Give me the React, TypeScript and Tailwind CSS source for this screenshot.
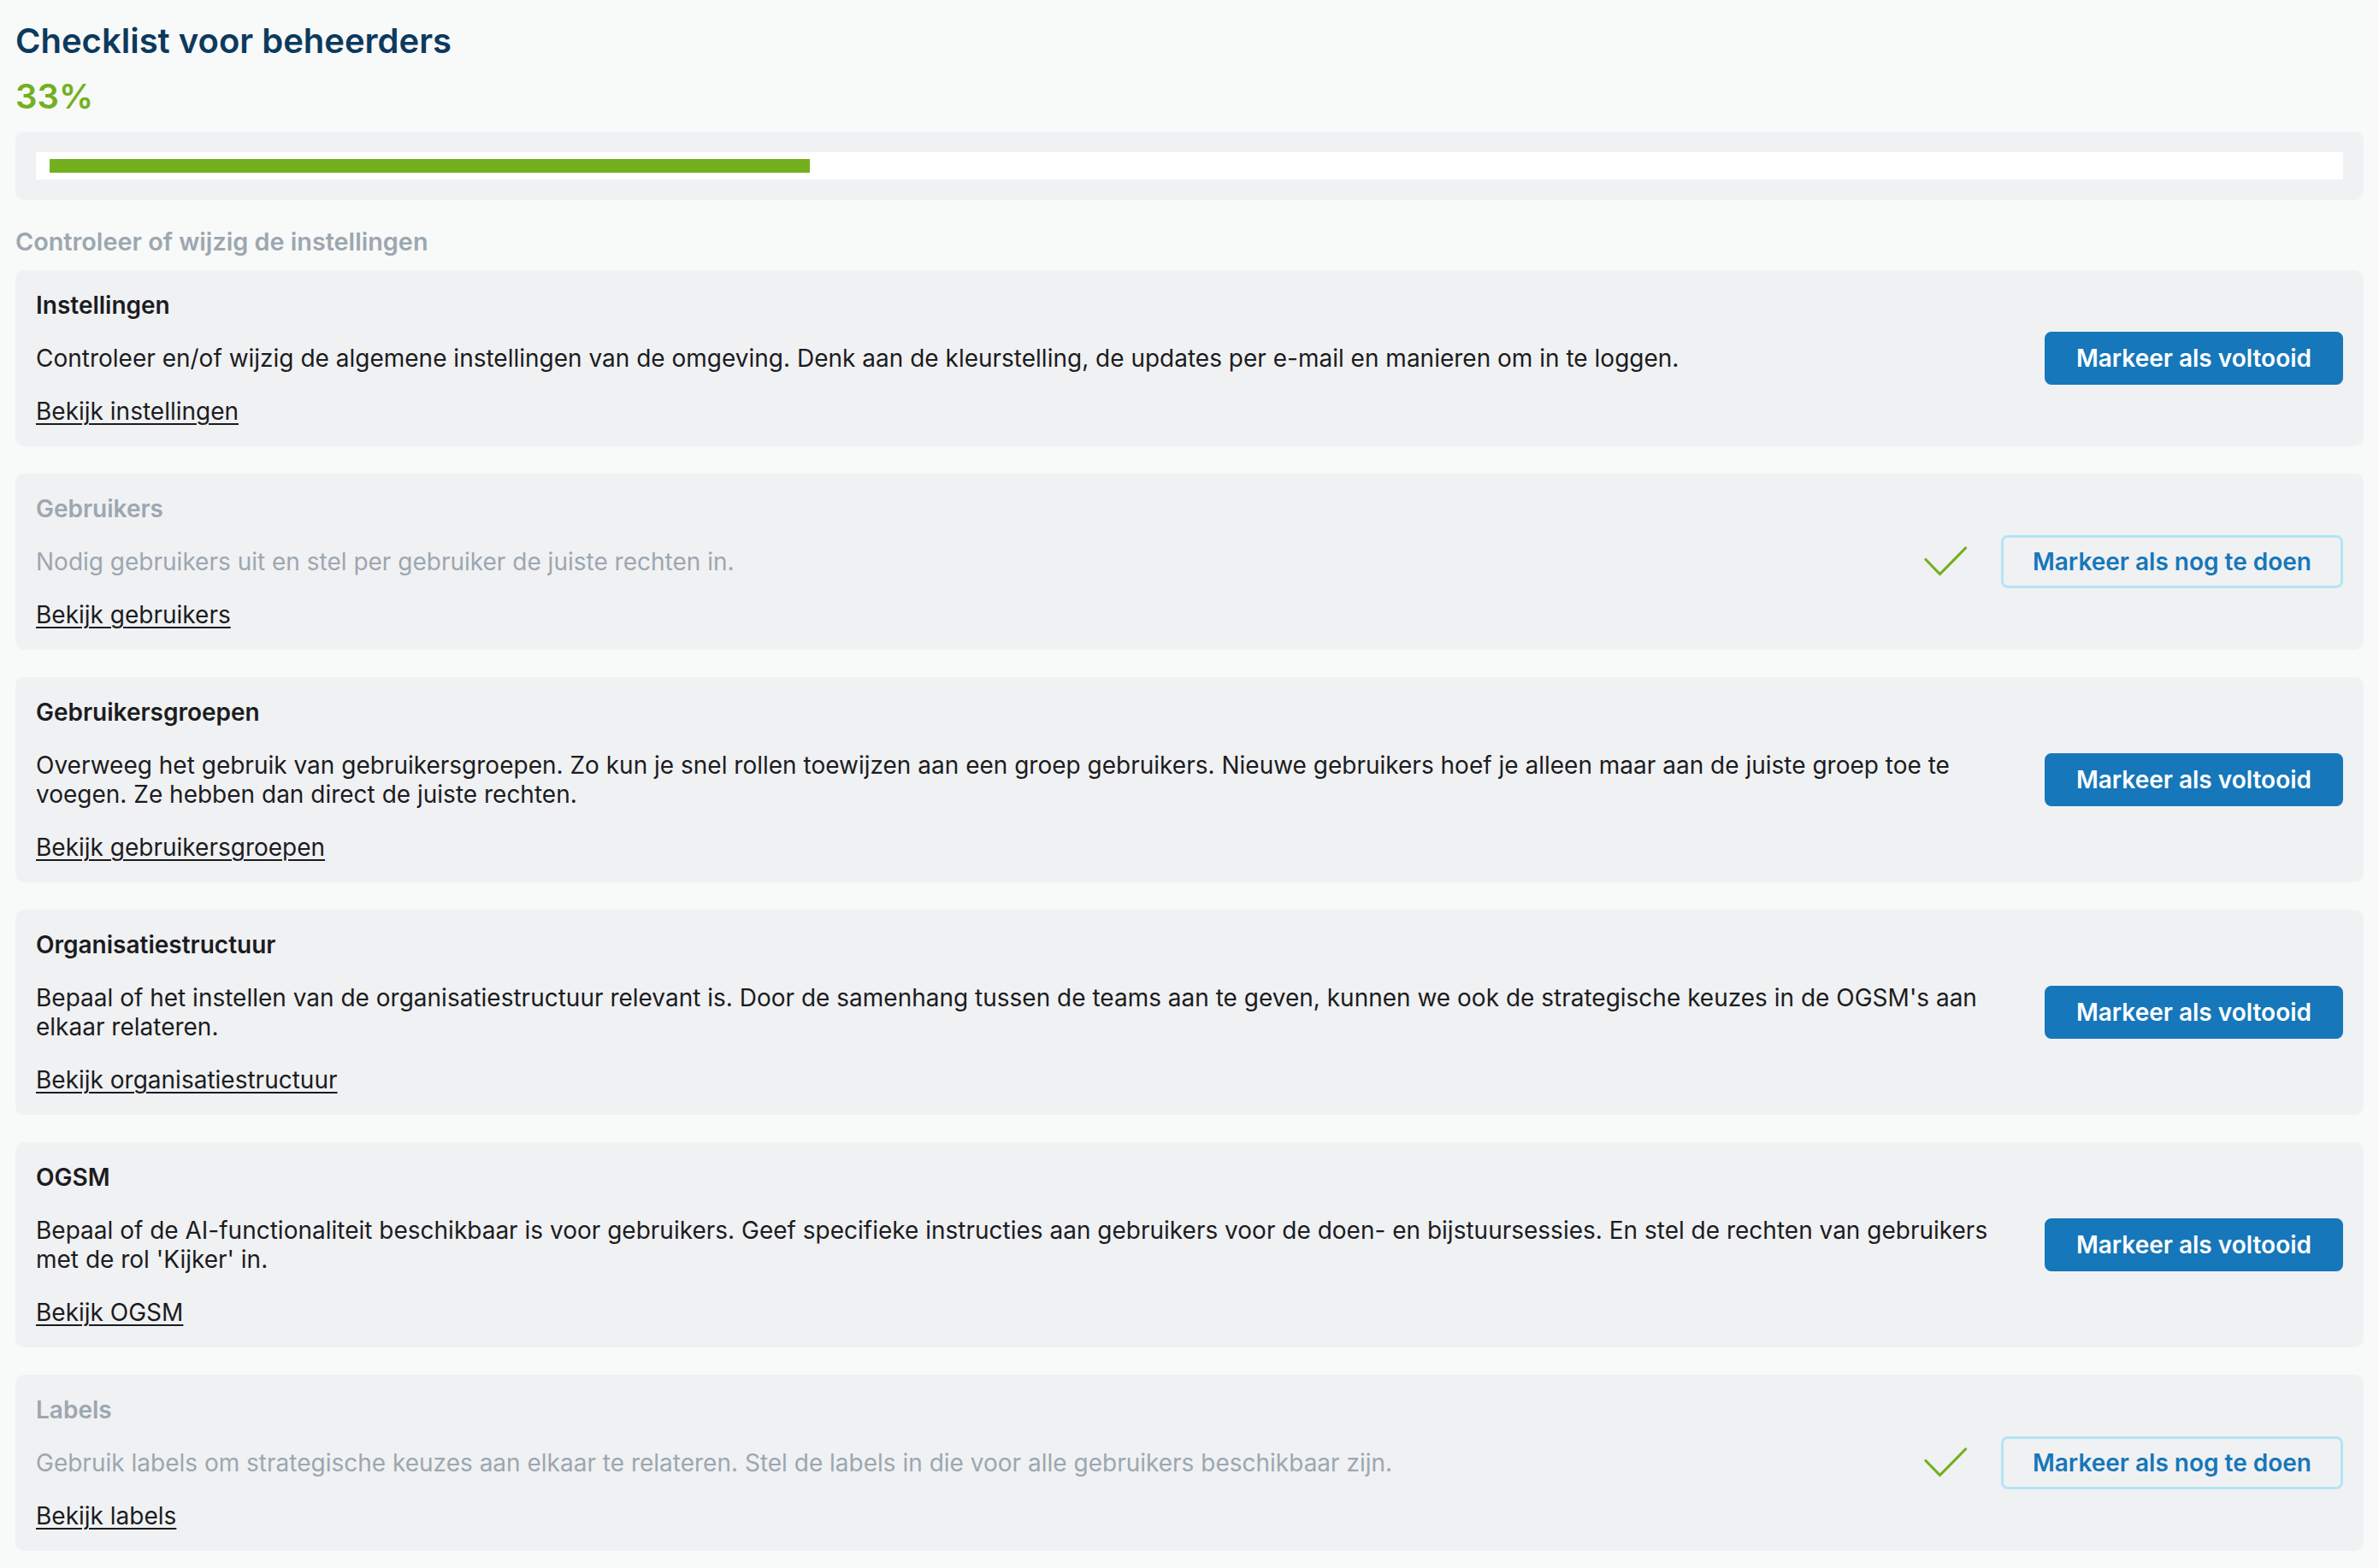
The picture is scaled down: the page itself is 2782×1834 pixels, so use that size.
import React from "react";

type ChecklistItem = {
    title: string;
    description: string;
    link: string;
    done: boolean;
};

const items: ChecklistItem[] = [
    {
        title: "Instellingen",
        description:
            "Controleer en/of wijzig de algemene instellingen van de omgeving. Denk aan de kleurstelling, de updates per e-mail en manieren om in te loggen.",
        link: "Bekijk instellingen",
        done: false
    },
    {
        title: "Gebruikers",
        description: "Nodig gebruikers uit en stel per gebruiker de juiste rechten in.",
        link: "Bekijk gebruikers",
        done: true
    },
    {
        title: "Gebruikersgroepen",
        description:
            "Overweeg het gebruik van gebruikersgroepen. Zo kun je snel rollen toewijzen aan een groep gebruikers. Nieuwe gebruikers hoef je alleen maar aan de juiste groep toe te voegen. Ze hebben dan direct de juiste rechten.",
        link: "Bekijk gebruikersgroepen",
        done: false
    },
    {
        title: "Organisatiestructuur",
        description:
            "Bepaal of het instellen van de organisatiestructuur relevant is. Door de samenhang tussen de teams aan te geven, kunnen we ook de strategische keuzes in de OGSM's aan elkaar relateren.",
        link: "Bekijk organisatiestructuur",
        done: false
    },
    {
        title: "OGSM",
        description:
            "Bepaal of de AI-functionaliteit beschikbaar is voor gebruikers. Geef specifieke instructies aan gebruikers voor de doen- en bijstuursessies. En stel de rechten van gebruikers met de rol 'Kijker' in.",
        link: "Bekijk OGSM",
        done: false
    },
    {
        title: "Labels",
        description:
            "Gebruik labels om strategische keuzes aan elkaar te relateren. Stel de labels in die voor alle gebruikers beschikbaar zijn.",
        link: "Bekijk labels",
        done: true
    }
];

const CheckIcon: React.FC = () => (
    <svg width="52" height="36" viewBox="0 0 52 36" fill="none">
        <polyline
            points="2,15.5 18.5,32.5 48.5,2"
            stroke="#72b01e"
            strokeWidth="3.2"
            strokeLinecap="round"
            strokeLinejoin="round"
        />
    </svg>
);

const ChecklistCard: React.FC<{ item: ChecklistItem }> = ({ item }) => {
    return (
        <div className="flex items-center gap-[40px] rounded-[10px] bg-[#f0f1f3] p-[24px]">
            <div className="flex min-w-0 flex-1 flex-col gap-[28px] text-[28px] leading-[34px]">
                <div className={item.done ? "font-semibold text-[#9ca7b0]" : "font-semibold text-[#1b1c20]"}>
                    {item.title}
                </div>
                <div className={item.done ? "text-[#9ca7b0]" : "text-[#1b1c20]"}>{item.description}</div>
                <div>
                    <a className="text-[#1b1c20] underline underline-offset-[4px] decoration-[2px] cursor-pointer">
                        {item.link}
                    </a>
                </div>
            </div>
            {item.done ? (
                <div className="flex shrink-0 items-center gap-[38px]">
                    <CheckIcon />
                    <button className="h-[62px] rounded-[8px] border-[3px] border-[#b3e5f7] px-[34px] text-[28px] font-semibold text-[#1677ba]">
                        Markeer als nog te doen
                    </button>
                </div>
            ) : (
                <button className="h-[62px] shrink-0 rounded-[8px] border-[3px] border-[#1677ba] bg-[#1677ba] px-[34px] text-[28px] font-semibold text-white">
                    Markeer als voltooid
                </button>
            )}
        </div>
    );
};

const App: React.FC = () => {
    const doneCount = items.filter((i) => i.done).length;
    const percent = (doneCount / items.length) * 100;

    return (
        <div className="min-h-screen bg-[#f8f9f9] px-[18px] pt-[24px] pb-[20px] font-['Inter',sans-serif]">
            <h1 className="text-[40px] leading-[48px] font-semibold text-[#0c3a5d]">Checklist voor beheerders</h1>
            <div className="mt-[17px] text-[40px] leading-[48px] font-semibold text-[#72b01e]">
                {Math.round(percent)}%
            </div>
            <div className="mt-[17px] rounded-[10px] bg-[#f0f1f3] p-[24px]">
                <div className="bg-white px-[16px] py-[8px]">
                    <div className="h-[16px] bg-[#72b01e]" style={{ width: `${percent}%` }} />
                </div>
            </div>
            <div className="mt-[32px] text-[28.8px] leading-[34px] font-semibold text-[#9ca7b0]">
                Controleer of wijzig de instellingen
            </div>
            <div className="mt-[16px] flex flex-col gap-[32px]">
                {items.map((item) => (
                    <ChecklistCard key={item.title} item={item} />
                ))}
            </div>
        </div>
    );
};

export default App;
